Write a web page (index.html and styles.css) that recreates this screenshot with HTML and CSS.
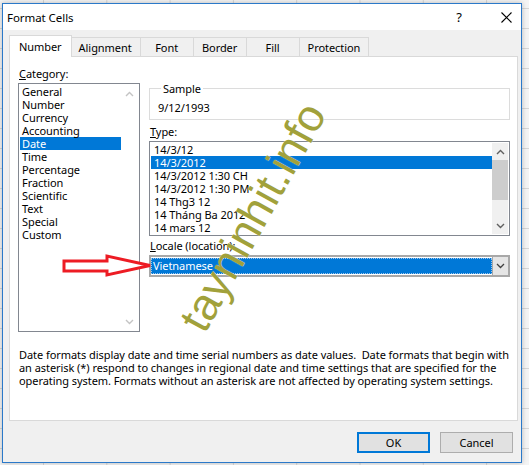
FILE: index.html
```html
<!DOCTYPE html>
<html>
<head>
<meta charset="utf-8">
<link rel="stylesheet" href="styles.css">
</head>
<body>
<div class="window">
  <div class="titlebar">
    <span class="title">Format Cells</span>
    <span class="help">?</span>
    <span class="close"><svg width="11" height="11" viewBox="0 0 11 11"><path d="M0.5 0.5 L10.5 10.5 M10.5 0.5 L0.5 10.5" stroke="#000" stroke-width="1.1" fill="none"/></svg></span>
  </div>
  <div class="client">
    <div class="tabs">
      <div class="tab active">Number</div>
      <div class="tab">Alignment</div>
      <div class="tab">Font</div>
      <div class="tab">Border</div>
      <div class="tab">Fill</div>
      <div class="tab">Protection</div>
    </div>
    <div class="panel">
      <div class="panel-main">
        <div class="left-col">
          <div class="label"><u>C</u>ategory:</div>
          <div class="listbox catlist">
            <div class="items">
              <div class="item">General</div>
              <div class="item">Number</div>
              <div class="item">Currency</div>
              <div class="item">Accounting</div>
              <div class="item sel">Date</div>
              <div class="item">Time</div>
              <div class="item">Percentage</div>
              <div class="item">Fraction</div>
              <div class="item">Scientific</div>
              <div class="item">Text</div>
              <div class="item">Special</div>
              <div class="item">Custom</div>
            </div>
            <div class="vscroll disabled">
              <div class="sb-btn"><svg width="9" height="6" viewBox="0 0 9 6"><path d="M1 5 L4.5 1.5 L8 5" stroke="#c4c4c4" stroke-width="1.4" fill="none"/></svg></div>
              <div class="sb-track"></div>
              <div class="sb-btn"><svg width="9" height="6" viewBox="0 0 9 6"><path d="M1 1 L4.5 4.5 L8 1" stroke="#c4c4c4" stroke-width="1.4" fill="none"/></svg></div>
            </div>
          </div>
        </div>
        <div class="right-col">
          <fieldset class="sample">
            <legend>Sample</legend>
            <div class="sample-value">9/12/1993</div>
          </fieldset>
          <div class="label"><u>T</u>ype:</div>
          <div class="listbox typelist">
            <div class="items">
              <div class="item">14/3/12</div>
              <div class="item sel">14/3/2012</div>
              <div class="item">14/3/2012 1:30 CH</div>
              <div class="item">14/3/2012 1:30 PM</div>
              <div class="item">14 Thg3 12</div>
              <div class="item">14 Tháng Ba 2012</div>
              <div class="item">14 mars 12</div>
            </div>
            <div class="vscroll">
              <div class="sb-btn"><svg width="9" height="6" viewBox="0 0 9 6"><path d="M1 5 L4.5 1.5 L8 5" stroke="#606060" stroke-width="1.4" fill="none"/></svg></div>
              <div class="sb-track"><div class="sb-thumb"></div></div>
              <div class="sb-btn"><svg width="9" height="6" viewBox="0 0 9 6"><path d="M1 1 L4.5 4.5 L8 1" stroke="#606060" stroke-width="1.4" fill="none"/></svg></div>
            </div>
          </div>
          <div class="label"><u>L</u>ocale (location):</div>
          <div class="combo">
            <div class="combo-field"><div class="combo-sel">Vietnamese</div></div>
            <div class="combo-btn"><svg width="9" height="6" viewBox="0 0 9 6"><path d="M1 1 L4.5 4.5 L8 1" stroke="#404040" stroke-width="1.3" fill="none"/></svg></div>
          </div>
        </div>
      </div>
      <p class="desc">Date formats display date and time serial numbers as date values.&nbsp; Date formats that begin with<br>an asterisk (*) respond to changes in regional date and time settings that are specified for the<br>operating system. Formats without an asterisk are not affected by operating system settings.</p>
    </div>
    <div class="buttons">
      <div class="btn default">OK</div>
      <div class="btn">Cancel</div>
    </div>
  </div>
</div>
<svg class="red-arrow" width="92" height="25" viewBox="0 0 92 25"><polygon points="2,7 45,7 45,2 88,11.5 45,21 45,17 2,17" fill="#fff" stroke="#ed1c24" stroke-width="3" stroke-linejoin="miter"/></svg>
<div class="watermark">tayninhit.info</div>
</body>
</html>
```
FILE: styles.css
```css
* { box-sizing: border-box; }
html, body { margin: 0; }
body {
  width: 529px;
  height: 465px;
  overflow: hidden;
  position: relative;
  padding: 3px 0 0 2px;
  font: 11px/13px "Noto Sans", sans-serif;
  letter-spacing: -0.06px;
  color: #000;
  background-color: #f4f4f4;
  background-image:
    linear-gradient(#d6d6d6 1px, transparent 1px),
    linear-gradient(90deg, #d6d6d6 1px, transparent 1px);
  background-size: 100% 20px, 63.3px 100%;
  background-position: 0 8px, 43px 0;
}
.window {
  width: 520px;
  height: 460px;
  border: 1px solid #2b79c9;
  background: #f0f0f0;
  display: flex;
  flex-direction: column;
  box-shadow: 0 0 5px rgba(0,0,0,0.25);
}
.titlebar {
  height: 26px;
  background: #fff;
  display: flex;
  align-items: center;
  padding-left: 4px;
  flex: none;
}
.title { font-size: 11.5px; flex: 1; }
.help { font-size: 13px; width: 12px; margin-right: 36px; text-align: center; }
.close { width: 11px; height: 11px; margin-right: 9px; display: flex; }
.client {
  flex: 1;
  display: flex;
  flex-direction: column;
  padding: 5px 3px 0 6px;
}
.tabs {
  display: flex;
  align-items: flex-end;
  height: 21px;
  flex: none;
}
.tab {
  height: 19px;
  min-width: 54px;
  padding: 0 8px;
  border: 1px solid #d9d9d9;
  border-bottom: none;
  margin-left: -1px;
  background: #f0f0f0;
  text-align: center;
  line-height: 19px;
}
.tab.active {
  height: 22px;
  margin-bottom: -1px;
  margin-left: 0;
  margin-right: -1px;
  background: #fff;
  padding: 0 9px;
  line-height: 21px;
  position: relative;
  z-index: 1;
}
.panel {
  height: 365px;
  border: 1px solid #d9d9d9;
  background: #fff;
  padding: 10px 8px 0 8px;
  flex: none;
}
.panel-main { display: flex; gap: 9px; }
.left-col { width: 122px; flex: none; }
.right-col { width: 361px; flex: none; padding-top: 15px; }
.label { padding-left: 1px; margin-bottom: 3px; height: 13px; }
.listbox {
  border: 1px solid #828790;
  padding: 1px;
  display: flex;
  background: #fff;
}
.catlist { height: 249px; }
.typelist { height: 95px; margin-bottom: 3px; }
.items { flex: 1; }
.item { height: 13px; padding-left: 3px; white-space: nowrap; }
.catlist .item { padding-left: 2px; }
.item.sel { background: #0078d7; color: #fff; }
.vscroll {
  width: 16px;
  display: flex;
  flex-direction: column;
  background: #f0f0f0;
}
.vscroll.disabled { width: 17px; background: #fff; }
.sb-btn { height: 17px; display: flex; align-items: center; justify-content: center; }
.sb-track { flex: 1; }
.sb-thumb { height: 40px; background: #cdcdcd; }
.sample {
  margin: 0 0 5px 0;
  padding: 0 0 5px 8px;
  border: 1px solid #dcdcdc;
  height: 38px;
  min-width: 0;
}
.sample legend { padding: 0 2px; margin-left: 3px; line-height: 13px; }
.sample-value { padding-top: 6px; }
.combo {
  height: 22px;
  border: 2px solid #a8a8a8;
  display: flex;
}
.combo-field { flex: 1; padding: 1px 0 1px 0; background: #fff; }
.combo-sel {
  height: 100%;
  background: #0078d7;
  color: #fff;
  border: 1px dotted #9cc6ee;
  padding-left: 1px;
  line-height: 14px;
}
.combo-btn {
  width: 16px;
  background: #e5e5e5;
  border-left: 1px solid #a8a8a8;
  display: flex;
  align-items: center;
  justify-content: center;
}
.desc { margin: 16px 0 0 0; padding-left: 1px; line-height: 13px; white-space: nowrap; }
.buttons {
  display: flex;
  justify-content: flex-end;
  gap: 10px;
  margin: 11px 5px 0 0;
}
.btn {
  width: 73px;
  height: 21px;
  background: #e1e1e1;
  border: 1px solid #adadad;
  text-align: center;
  line-height: 19px;
}
.btn.default { border: 2px solid #0078d7; line-height: 17px; }
.red-arrow { position: absolute; left: 62px; top: 254px; }
.watermark {
  position: absolute;
  left: 93px;
  top: 192px;
  width: 320px;
  text-align: center;
  font: 45px/50px "Liberation Sans", Arial, sans-serif;
  letter-spacing: 0;
  color: #a1a13b;
  text-shadow: 0 0 1px #fff;
  transform: rotate(-61deg);
  transform-origin: 50% 50%;
  white-space: nowrap;
}
```
